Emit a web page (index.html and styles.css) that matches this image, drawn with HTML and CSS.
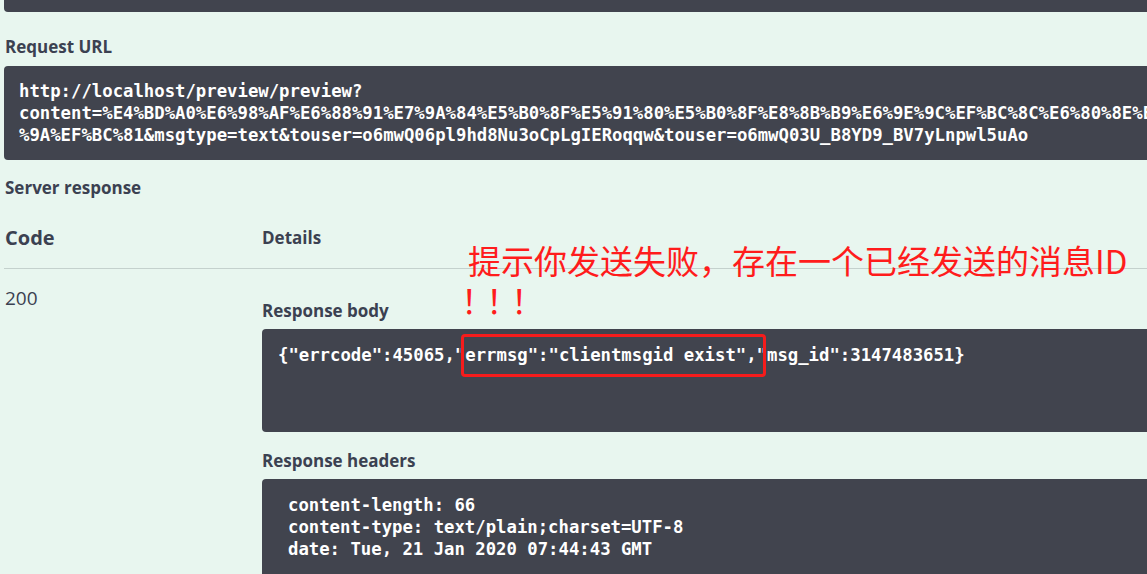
FILE: index.html
```
<!DOCTYPE html>
<html lang="zh-CN">

<head>
    <meta charset="UTF-8">
    <meta name="viewport" content="width=device-width, initial-scale=1.0">
    <link rel="stylesheet" href="styles.css">
    <title>Swagger - preview</title>
</head>

<body>
    <div class="opblock">
        <div class="prev-block"></div>

        <h4 class="label">Request URL</h4>
        <pre class="code url">http://localhost/preview/preview?
content=%E4%BD%A0%E6%98%AF%E6%88%91%E7%9A%84%E5%B0%8F%E5%91%80%E5%B0%8F%E8%8B%B9%E6%9E%9C%EF%BC%8C%E6%80%8E%E4%B9%88%E7%88%B1%E4%BD%A0%E9%83%BD%E4%B8%8D%E5%AB%8C%E5%A4%
%9A%EF%BC%81&amp;msgtype=text&amp;touser=o6mwQ06pl9hd8Nu3oCpLgIERoqqw&amp;touser=o6mwQ03U_B8YD9_BV7yLnpwl5uAo</pre>

        <h4 class="label">Server response</h4>

        <div class="responses">
            <div class="resp-head">
                <div class="col-code">Code</div>
                <div class="col-details">Details</div>
            </div>
            <div class="resp-row">
                <div class="col-code status">200</div>
                <div class="col-details">
                    <h5 class="sub-label">Response body</h5>
                    <pre class="code body">{"errcode":45065,"errmsg":"clientmsgid exist","msg_id":3147483651}</pre>
                    <h5 class="sub-label">Response headers</h5>
                    <pre class="code headers"><span>content-length: 66
content-type: text/plain;charset=UTF-8
date: Tue, 21 Jan 2020 07:44:43 GMT</span></pre>
                </div>
            </div>
        </div>
    </div>

    <!-- annotations drawn over the screenshot -->
    <div class="note">提示你发送失败，存在一个已经发送的消息ID<br><span class="bang">！！！</span></div>
    <div class="mark"></div>
</body>

</html>
```

FILE: styles.css
```
* {
    margin: 0;
    padding: 0;
    box-sizing: border-box;
}

html,
body {
    height: 100%;
    overflow: hidden;
}

body {
    background-color: #e8f6ef;
    font-family: "Open Sans", "Noto Sans", sans-serif;
    color: #3b4151;
    position: relative;
}

.opblock {
    padding-left: 4px;
    width: 1600px;
}

.prev-block {
    height: 12px;
    background-color: #41444e;
    border-radius: 0 0 4px 4px;
}

.label {
    font-size: 17px;
    font-weight: 700;
    line-height: 20px;
    padding-left: 1px;
}

.prev-block + .label {
    margin-top: 25px;
    margin-bottom: 9px;
}

.url + .label {
    margin-top: 18px;
}

.code {
    background-color: #41444e;
    color: #fff;
    border-radius: 4px;
    font-family: "DejaVu Sans Mono", "Liberation Mono", monospace;
    font-weight: 700;
    font-size: 17.3px;
    line-height: 22px;
    white-space: pre;
    overflow: hidden;
}

.url {
    padding: 14px 15px;
}

.resp-head {
    display: flex;
    align-items: center;
    line-height: 20px;
    padding: 30px 0 20px;
    border-bottom: 1px solid #c4d1cd;
}

.col-code {
    width: 258px;
    padding-left: 1px;
}

.col-details {
    flex: 1;
}

.resp-head .col-code {
    font-size: 20px;
    font-weight: 700;
}

.resp-head .col-details {
    font-size: 17px;
    font-weight: 700;
}

.resp-row {
    display: flex;
    padding-top: 15px;
}

.status {
    font-size: 19px;
    line-height: 28px;
}

.sub-label {
    font-size: 17px;
    font-weight: 700;
    line-height: 20px;
    margin-top: 17px;
    margin-bottom: 8px;
}

.body + .sub-label {
    margin-top: 19px;
}

.body {
    height: 103px;
    padding: 15px 16px;
}

.headers {
    padding: 15px 26px;
    height: 200px;
}

.note {
    position: absolute;
    left: 468px;
    top: 240px;
    font-family: "Noto Sans CJK SC", sans-serif;
    font-size: 33px;
    line-height: 40px;
    color: #ff1c1c;
}

.bang {
    display: inline-block;
    margin-left: -7px;
    letter-spacing: -8px;
}

.mark {
    position: absolute;
    left: 461px;
    top: 334px;
    width: 305px;
    height: 43px;
    border: 3px solid #f61c1c;
    border-radius: 4px;
}
```
